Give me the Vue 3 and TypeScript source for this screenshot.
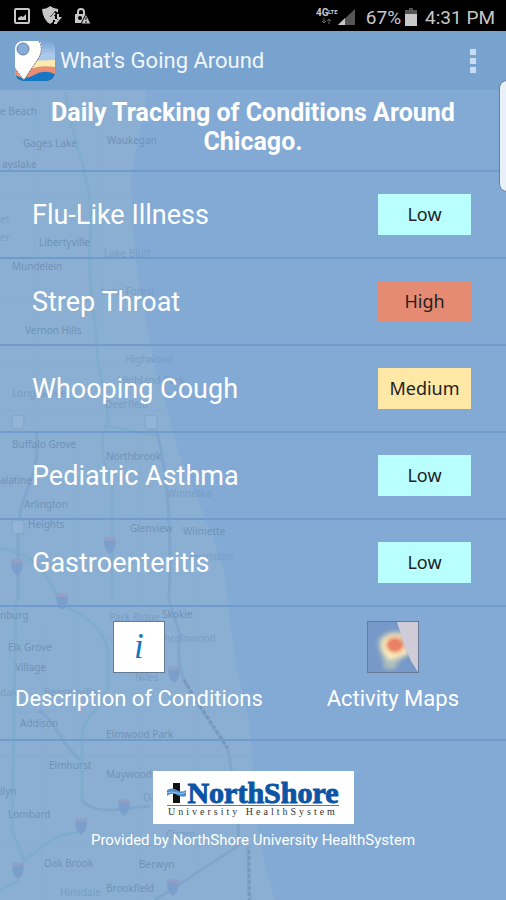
<script setup lang="ts">
type Level = 'Low' | 'Medium' | 'High'

interface Condition {
  name: string
  level: Level
}

interface Place {
  name: string
  x: number
  y: number
  faint?: boolean
}

const conditions: Condition[] = [
  { name: 'Flu-Like Illness', level: 'Low' },
  { name: 'Strep Throat', level: 'High' },
  { name: 'Whooping Cough', level: 'Medium' },
  { name: 'Pediatric Asthma', level: 'Low' },
  { name: 'Gastroenteritis', level: 'Low' },
]

const places: Place[] = [
  { name: 'e Beach', x: 0, y: 115 },
  { name: 'Gages Lake', x: 23, y: 147 },
  { name: 'ayslake', x: 2, y: 168 },
  { name: 'Waukegan', x: 107, y: 144 },
  { name: 'et', x: 0, y: 223, faint: true },
  { name: 'er', x: 0, y: 241, faint: true },
  { name: 'Libertyville', x: 39, y: 246 },
  { name: 'Lake Bluff', x: 104, y: 257, faint: true },
  { name: 'Mundelein', x: 12, y: 270 },
  { name: 'Lake Forest', x: 101, y: 295, faint: true },
  { name: 'Vernon Hills', x: 25, y: 334 },
  { name: 'Highwood', x: 125, y: 363, faint: true },
  { name: 'Highland Park', x: 118, y: 384, faint: true },
  { name: 'Long Grove', x: 12, y: 397, faint: true },
  { name: 'Deerfield', x: 105, y: 408, faint: true },
  { name: 'Buffalo Grove', x: 12, y: 448 },
  { name: 'Northbrook', x: 106, y: 460 },
  { name: 'alatine', x: 0, y: 484 },
  { name: 'Winnetka', x: 167, y: 497, faint: true },
  { name: 'Arlington', x: 24, y: 508 },
  { name: 'Heights', x: 28, y: 528 },
  { name: 'Glenview', x: 130, y: 532 },
  { name: 'Wilmette', x: 183, y: 535 },
  { name: 'Evanston', x: 190, y: 560, faint: true },
  { name: 'nburg', x: 0, y: 619 },
  { name: 'Park Ridge', x: 109, y: 621, faint: true },
  { name: 'Skokie', x: 162, y: 618 },
  { name: 'Lincolnwood', x: 156, y: 642, faint: true },
  { name: 'Elk Grove', x: 8, y: 651 },
  { name: 'Village', x: 15, y: 671 },
  { name: 'Niles', x: 135, y: 681, faint: true },
  { name: 'dale', x: 0, y: 696, faint: true },
  { name: 'Bensenville', x: 44, y: 696, faint: true },
  { name: 'Addison', x: 20, y: 727 },
  { name: 'Elmwood Park', x: 106, y: 738 },
  { name: 'Elmhurst', x: 49, y: 769 },
  { name: 'Maywood', x: 106, y: 778 },
  { name: 'Oak Park', x: 143, y: 801, faint: true },
  { name: 'llyn', x: 0, y: 795 },
  { name: 'Lombard', x: 8, y: 818 },
  { name: 'Cicero', x: 166, y: 838, faint: true },
  { name: 'Oak Brook', x: 44, y: 867 },
  { name: 'Berwyn', x: 139, y: 868 },
  { name: 'Hinsdale', x: 60, y: 896, faint: true },
  { name: 'Brookfield', x: 106, y: 892 },
]

const shields: [number, number][] = [
  [110, 545], [17, 567], [62, 601], [174, 674], [124, 807], [81, 826], [18, 870], [173, 887],
]

const routes: [number, number][] = [[18, 422], [151, 422], [18, 527]]
</script>

<template>
  <div class="screen">
    <svg class="map" viewBox="0 0 506 900" preserveAspectRatio="xMinYMin slice" aria-hidden="true">
      <path
        class="land"
        d="M0 0H150L146 100 136 150 131 180 133 230 139 285 148 330 154 365 167 410 178 450 193 490 210 530 224 570 230 620 237 670 248 715 253 760 256 820 266 870 275 900H0Z"
      />
      <g class="grid">
        <path d="M0 196H132M0 300H142M0 362H152M0 410H165M0 480H188M0 560H220M0 640H232M0 712H246M0 755H250M0 845H258M34 90V430M102 90V330M74 420V760M140 440V900M198 560V880M42 620V900" />
      </g>
      <g class="green-road">
        <path d="M66 92C68 125 83 155 89 195S86 235 91 285C91 310 98 330 97 350S108 390 108 422C99 438 101 462 112 480V600" />
        <path d="M108 426L155 436" />
        <path d="M0 549C35 550 52 580 60 605C88 614 104 632 108 650V680C108 709 84 710 82 738V800" />
        <path d="M16 600L12 830 24 860C42 850 45 837 78 832M0 890L20 880" />
      </g>
      <g class="road">
        <path d="M36 432C42 480 19 490 18 530V600M156 430C171 480 171 560 169 600L180 635C174 670 187 688 203 712L228 750C235 790 240 820 238 846L155 900" />
        <path d="M38 710C55 720 64 748 80 760M82 800C96 817 121 808 150 806M248 846C249 865 247 880 251 900" />
      </g>
      <path class="street" d="M184 680L198 703 228 748M249 850V900" />
      <g v-for="([x, y], i) in shields" :key="'s' + i" :transform="`translate(${x} ${y})`">
        <path class="shield" d="M-5 -8Q0 -6 5 -8Q8 3 0 9Q-8 3 -5 -8Z" />
        <path class="shield-top" d="M-5 -8Q0 -6 5 -8L6 -4H-6Z" />
      </g>
      <rect
        v-for="([x, y], i) in routes"
        :key="'r' + i"
        class="route"
        :x="x - 6"
        :y="y - 7"
        width="12"
        height="14"
        rx="3"
      />
      <text
        v-for="place in places"
        :key="place.name"
        class="place"
        :class="{ faint: place.faint }"
        :x="place.x"
        :y="place.y"
      >{{ place.name }}</text>
    </svg>

    <div class="status-bar">
      <div class="status-group notices">
        <svg width="16" height="18" viewBox="0 0 16 18" aria-hidden="true">
          <rect x="1" y="2" width="14" height="14" rx="1" fill="none" stroke="#c8c8c8" stroke-width="2" />
          <path d="M4 13V11L7 9L9 10L12 7V13Z" fill="#c8c8c8" />
        </svg>
        <svg width="20" height="20" viewBox="0 0 20 20" aria-hidden="true">
          <path d="M0 3Q5 3 8 0Q12 3 16 3V8Q15 14 8 18Q1 14 0 3Z" fill="#c8c8c8" />
          <path d="M13 5L8 11H11V18H15L19 12H17V7Z" fill="#000" />
          <path d="M13 7L10 11H12V14M12 17H14V13M14 17L18 12H16V8" fill="none" stroke="#c8c8c8" stroke-width="2" />
        </svg>
        <svg width="17" height="18" viewBox="0 0 17 18" aria-hidden="true">
          <path d="M4 8V5Q4 2 7 2T10 5V8" fill="none" stroke="#c8c8c8" stroke-width="2" />
          <rect x="1" y="7" width="11" height="9" fill="#c8c8c8" />
          <circle cx="6" cy="11" r="2" fill="#000" />
          <path d="M12 7L17 17H7Z" fill="#c8c8c8" stroke="#000" />
          <path d="M12 10V13M12 14V16" stroke="#000" />
        </svg>
      </div>
      <div class="status-group system">
        <svg class="network" width="39" height="18" viewBox="0 0 39 18" aria-hidden="true">
          <text x="0" y="8" class="network-name">4G</text>
          <text x="12" y="6" class="network-suffix">LTE</text>
          <path d="M8 10V15M6 13L8 15L10 13M13 16V11M11 13L13 11L15 13" fill="none" stroke="#666" />
          <path d="M22 17L39 1V17Z" fill="#555" />
          <path d="M22 17L29 10V17Z" fill="#c8c8c8" />
        </svg>
        <span class="percent">67%</span>
        <svg width="12" height="18" viewBox="0 0 12 18" aria-hidden="true">
          <path d="M4 0H8V2H12V18H0V2H4Z" fill="#555" />
          <path d="M0 6H12V18H0Z" fill="#c8c8c8" />
        </svg>
        <span class="clock">4:31 PM</span>
      </div>
    </div>

    <header class="app-bar">
      <svg class="app-icon" width="40" height="40" viewBox="0 0 40 40" aria-hidden="true">
        <defs>
          <clipPath id="icon-shape"><rect width="40" height="40" rx="8" /></clipPath>
          <linearGradient id="icon-sky" x2="0" y2="1">
            <stop offset="0" stop-color="#77a4d9" />
            <stop offset="0.5" stop-color="#c3daf1" />
          </linearGradient>
        </defs>
        <g clip-path="url(#icon-shape)">
          <rect width="40" height="40" fill="url(#icon-sky)" />
          <path d="M20 13Q29 17 40 14V40H0Z" fill="#a9c9ec" />
          <path d="M0 22Q20 19 40 19V40H0Z" fill="#fcebad" />
          <path d="M0 27Q9 30 18 27T40 26V40H0Z" fill="#e98e74" />
          <path d="M0 34Q9 40 19 34T40 33V40H0Z" fill="#1678c4" />
          <path d="M0 0H25Q29 8 23 18L9 39Q2 33 0 25Z" fill="#fff" />
          <path d="M24 0Q29 9 23 18L9 39L1 29" fill="none" stroke="#666" stroke-dasharray="2 1" />
          <circle cx="8" cy="8" r="6" fill="#86add9" stroke="#66809c" />
        </g>
      </svg>
      <h1>What's Going Around</h1>
      <button class="menu" type="button" aria-label="More options">
        <span class="dot"></span>
        <span class="dot"></span>
        <span class="dot"></span>
      </button>
    </header>

    <main>
      <h2>Daily Tracking of Conditions Around Chicago.</h2>
      <ul class="conditions">
        <li v-for="condition in conditions" :key="condition.name">
          <span class="name">{{ condition.name }}</span>
          <span class="level" :class="condition.level.toLowerCase()">{{ condition.level }}</span>
        </li>
      </ul>
      <nav class="actions">
        <button class="action" type="button">
          <span class="tile info">i</span>
          <span>Description of Conditions</span>
        </button>
        <button class="action" type="button">
          <svg class="tile" viewBox="0 0 50 50" aria-hidden="true">
            <defs>
              <filter id="soft" x="-30%" y="-30%" width="160%" height="160%"><feGaussianBlur stdDeviation="2" /></filter>
            </defs>
            <rect width="50" height="50" fill="#7799c9" />
            <g filter="url(#soft)">
              <path d="M10 18Q18 7 34 10L42 33Q30 37 27 47H16Q16 36 11 29Z" fill="#aebfbd" />
              <path d="M14 20Q19 10 34 13L40 31Q28 36 22 38Q13 31 14 20Z" fill="#fff0bd" />
              <ellipse cx="27" cy="23" rx="9" ry="8" fill="#e8805f" />
            </g>
            <ellipse cx="27" cy="23" rx="6" ry="5" fill="#e98268" />
            <path d="M29 0H50V50L43 39 36 22Z" fill="#cfccd7" />
          </svg>
          <span>Activity Maps</span>
        </button>
      </nav>
    </main>

    <footer>
      <div class="logo">
        <div class="wordmark">
          <svg width="20" height="20" viewBox="0 0 20 20" aria-hidden="true">
            <path d="M6 0H13V20H6Z" fill="#111" />
            <path d="M0 7Q5 4 10 7T19 7V13Q15 15 10 12T0 13Z" fill="#4c8ccb" />
            <path d="M0 10Q5 8 10 10T19 9" fill="none" stroke="#9ac4ea" />
          </svg>
          <span>NorthShore</span>
        </div>
        <div class="tagline">University HealthSystem</div>
      </div>
      <p>Provided by NorthShore University HealthSystem</p>
    </footer>

    <div class="edge-handle"></div>
  </div>
</template>

<style>
body {
  margin: 0;
  background: #82aad5;
}
</style>

<style scoped>
.screen {
  position: relative;
  min-height: 100vh;
  overflow: hidden;
  background: #82aad5;
  color: #fff;
  font-family: Roboto, "Liberation Sans", sans-serif;
}

.map {
  position: absolute;
  inset: 0;
  width: 100%;
  height: 100%;
}

.land { fill: #8aafd2; }

.grid path {
  fill: none;
  stroke: #86acd1;
}

.road path {
  fill: none;
  stroke: #80a6ce;
  stroke-width: 3;
}

.green-road path {
  fill: none;
  stroke: #80adcc;
  stroke-width: 3;
}

.street {
  fill: none;
  stroke: #7797bc;
  stroke-width: 3;
  stroke-dasharray: 4 2;
}

.shield { fill: #7b9fcc; }
.shield-top { fill: #929fc4; }

.route {
  fill: #92b4d6;
  stroke: #7fa4ca;
}

.place {
  fill: #7092b8;
  font-family: "Noto Sans", sans-serif;
  font-size: 10px;
}

.place.faint { fill: #799dc4; }

.status-bar,
.app-bar,
main,
footer {
  position: relative;
}

.status-bar {
  display: flex;
  align-items: center;
  justify-content: space-between;
  height: 31px;
  padding: 0 11px 0 14px;
  background: #000;
  color: #c8c8c8;
  font-size: 19px;
}

.status-group {
  display: flex;
  align-items: center;
}

.notices { gap: 12px; }
.system { gap: 4px; padding-top: 3px; }
.percent { margin-left: 7px; }
.clock { margin-left: 4px; }

.network-name,
.network-suffix {
  fill: #c8c8c8;
  font-size: 10px;
  font-weight: 700;
}

.network-suffix { font-size: 6px; }

.app-bar {
  display: flex;
  align-items: center;
  gap: 5px;
  height: 59px;
  padding: 0 24px 0 15px;
  background: #79a3cf;
}

h1 {
  flex: 1;
  margin: 0;
  font-size: 22px;
  font-weight: 400;
  color: #f0f6fc;
}

.menu {
  display: flex;
  flex-direction: column;
  gap: 3px;
  padding: 6px;
  border: 0;
  background: none;
}

.dot {
  width: 6px;
  height: 6px;
  background: #c9ddf0;
}

h2 {
  margin: 0;
  padding: 8px 40px 14px;
  font-size: 25px;
  line-height: 29px;
  text-align: center;
  border-bottom: 2px solid #709ccd;
}

.conditions {
  margin: 0;
  padding: 0;
  list-style: none;
}

.conditions li {
  display: flex;
  align-items: center;
  justify-content: space-between;
  height: 85px;
  padding: 0 35px 0 32px;
  border-bottom: 2px solid #709ccd;
}

.name { font-size: 27px; }

.level {
  width: 93px;
  font-family: "Noto Sans", sans-serif;
  font-size: 18px;
  line-height: 41px;
  text-align: center;
  color: #222;
}

.low { background: #b9ffff; }
.medium { background: #ffe8a6; }
.high { background: #e68b73; }

.actions {
  display: flex;
  justify-content: space-between;
  padding: 14px 47px 26px 15px;
  border-bottom: 2px solid #709ccd;
}

.action {
  display: flex;
  flex-direction: column;
  align-items: center;
  gap: 12px;
  padding: 0;
  border: 0;
  background: none;
  color: inherit;
  font-family: inherit;
  font-size: 22px;
  line-height: 28px;
}

.tile {
  width: 50px;
  height: 50px;
  border: 1px solid #687993;
}

.info {
  background: #fff;
  color: #1678bd;
  font-family: "Liberation Serif", serif;
  font-size: 35px;
  font-style: italic;
  line-height: 50px;
}

footer {
  display: flex;
  flex-direction: column;
  align-items: center;
  padding-top: 30px;
}

.logo {
  display: flex;
  flex-direction: column;
  align-items: center;
  box-sizing: border-box;
  width: 201px;
  height: 53px;
  padding-top: 9px;
  background: #fff;
}

.wordmark {
  display: flex;
  align-items: center;
  height: 25px;
  border-bottom: 1px solid #777;
  color: #0c55a5;
  font-family: "Liberation Serif", serif;
  font-size: 30px;
  font-weight: 700;
  -webkit-text-stroke: 1px #0c55a5;
}

.tagline {
  color: #333;
  font-family: "Liberation Serif", serif;
  font-size: 10px;
  line-height: 12px;
  letter-spacing: 3px;
  white-space: nowrap;
}

footer p {
  margin: 6px 0 0;
  font-size: 15px;
  line-height: 20px;
}

.edge-handle {
  position: absolute;
  top: 80px;
  right: -10px;
  width: 15px;
  height: 110px;
  border: 1px solid #6b7f98;
  border-radius: 8px;
  background: #e9f0f8;
}
</style>
